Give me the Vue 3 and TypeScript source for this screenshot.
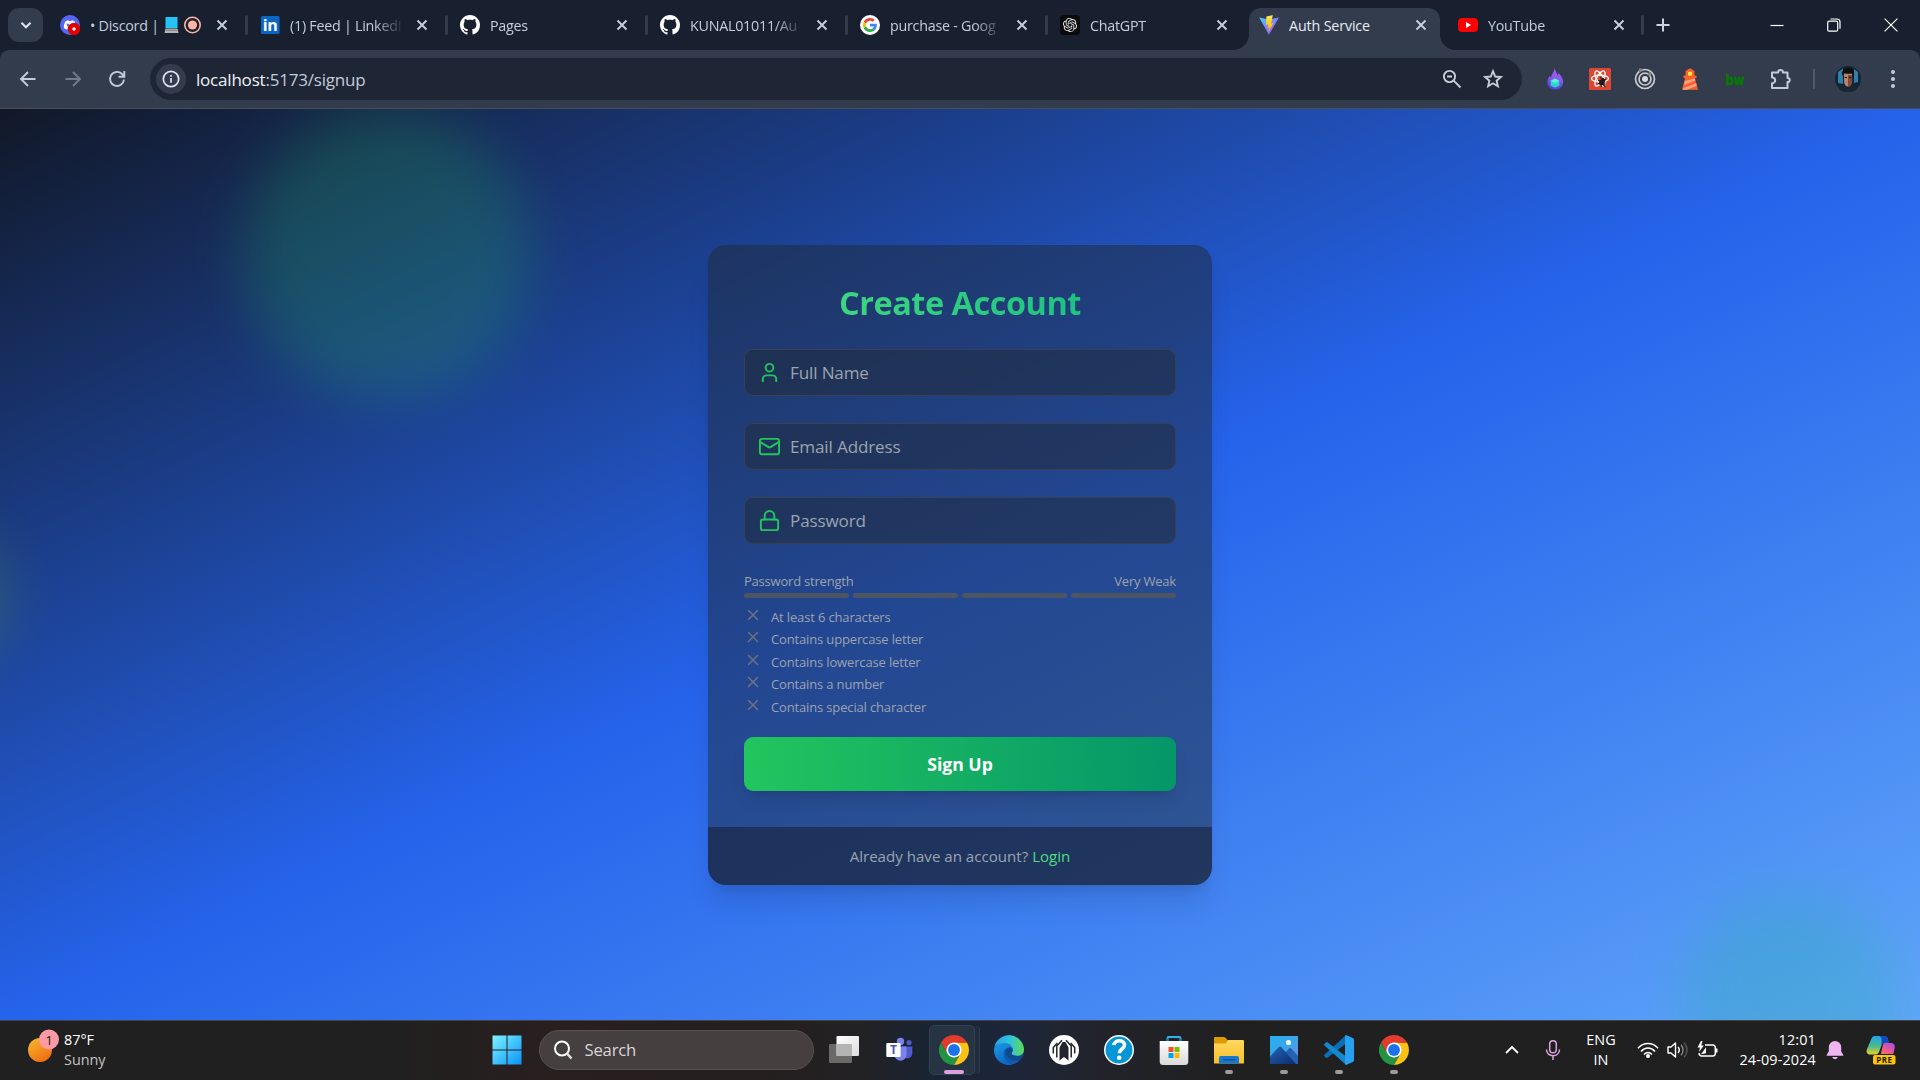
<script setup lang="ts">
interface Tab {
  icon: string
  title: string
  active?: boolean
  divider?: boolean
}

const tabs: Tab[] = [
  { icon: 'discord', title: '• Discord |', divider: true },
  { icon: 'linkedin', title: '(1) Feed | LinkedI', divider: true },
  { icon: 'github', title: 'Pages', divider: true },
  { icon: 'github', title: 'KUNAL01011/Au', divider: true },
  { icon: 'google', title: 'purchase - Goog', divider: true },
  { icon: 'chatgpt', title: 'ChatGPT' },
  { icon: 'vite', title: 'Auth Service', active: true },
  { icon: 'youtube', title: 'YouTube', divider: true },
]

const extensions: string[] = ['flame', 'react', 'rings', 'lighthouse', 'bw', 'puzzle']

const fields = [
  { icon: 'user', label: 'Full Name' },
  { icon: 'mail', label: 'Email Address' },
  { icon: 'lock', label: 'Password' },
]

const criteria: string[] = [
  'At least 6 characters',
  'Contains uppercase letter',
  'Contains lowercase letter',
  'Contains a number',
  'Contains special character',
]

const apps = [
  { icon: 'taskview', state: '' },
  { icon: 'teams', state: '' },
  { icon: 'chrome', state: 'focused' },
  { icon: 'edge', state: '' },
  { icon: 'arch', state: '' },
  { icon: 'help', state: '' },
  { icon: 'store', state: '' },
  { icon: 'explorer', state: 'running' },
  { icon: 'photos', state: 'running' },
  { icon: 'vscode', state: 'running' },
  { icon: 'chrome', state: 'running' },
]
</script>

<template>
  <div class="screen">
    <svg class="sprite" width="0" height="0" aria-hidden="true">
      <defs>
        <linearGradient id="g-vite" x1="0" y1="0" x2="1" y2="1"><stop offset="0" stop-color="#41d1ff" /><stop offset="1" stop-color="#bd34fe" /></linearGradient>
        <linearGradient id="g-bolt" x1="0" y1="0" x2="0" y2="1"><stop offset="0" stop-color="#ffea83" /><stop offset="0.2" stop-color="#ffdd35" /><stop offset="1" stop-color="#ffa800" /></linearGradient>
        <linearGradient id="g-flame" x1="0.6" y1="0" x2="0.4" y2="1"><stop offset="0" stop-color="#b45cf5" /><stop offset="0.5" stop-color="#8a55f2" /><stop offset="1" stop-color="#4b45dd" /></linearGradient>
        <linearGradient id="g-win" x1="0" y1="0" x2="1" y2="1"><stop offset="0" stop-color="#7df3ff" /><stop offset="1" stop-color="#0a93fb" /></linearGradient>
        <linearGradient id="g-sun" x1="0.2" y1="0" x2="0.8" y2="1"><stop offset="0" stop-color="#f5b52e" /><stop offset="1" stop-color="#f0680f" /></linearGradient>
        <linearGradient id="g-edge1" x1="0" y1="0.5" x2="1" y2="0.5"><stop offset="0" stop-color="#2b9fe4" /><stop offset="0.5" stop-color="#2fc2df" /><stop offset="1" stop-color="#61d94f" /></linearGradient>
        <linearGradient id="g-edge2" x1="0" y1="0" x2="0.6" y2="1"><stop offset="0" stop-color="#1b9de2" /><stop offset="1" stop-color="#0b65c6" /></linearGradient>
        <linearGradient id="g-folder" x1="0" y1="0" x2="0" y2="1"><stop offset="0" stop-color="#ffd95e" /><stop offset="1" stop-color="#f8bd2c" /></linearGradient>
        <linearGradient id="g-photo" x1="0" y1="0" x2="1" y2="1"><stop offset="0" stop-color="#26aef0" /><stop offset="0.55" stop-color="#3ba5e8" /><stop offset="1" stop-color="#8b7bdc" /></linearGradient>
        <linearGradient id="g-mount" x1="0" y1="0" x2="1" y2="1"><stop offset="0" stop-color="#2463b5" /><stop offset="1" stop-color="#0b2c6b" /></linearGradient>
        <linearGradient id="g-store" x1="0" y1="0" x2="0" y2="1"><stop offset="0" stop-color="#ffffff" /><stop offset="1" stop-color="#d9d9d9" /></linearGradient>
        <linearGradient id="g-tv1" x1="0" y1="0" x2="1" y2="1"><stop offset="0" stop-color="#ffffff" /><stop offset="1" stop-color="#dcdcdc" /></linearGradient>
        <linearGradient id="g-cop1" x1="0" y1="0" x2="0" y2="1"><stop offset="0" stop-color="#1fa3ee" /><stop offset="0.55" stop-color="#4cb98d" /><stop offset="1" stop-color="#e8d325" /></linearGradient>
        <linearGradient id="g-cop2" x1="0.8" y1="0" x2="0.2" y2="1"><stop offset="0" stop-color="#a84fe6" /><stop offset="0.5" stop-color="#e254a5" /><stop offset="1" stop-color="#fb6f5e" /></linearGradient>

        <symbol id="discord" viewBox="0 0 20 20">
          <circle cx="10" cy="10" r="10" fill="#5865f2" />
          <path d="M5.6 6.2C7 5.4 8 5.3 8.3 5.3l.4.7h2.6l.4-.7c.4 0 1.5.2 2.7.9 1.2 1.8 1.9 4.2 1.7 6.8-1 .9-2.3 1.3-3.2 1.4l-.7-1.2H7.8l-.7 1.2c-1-.1-2.2-.6-3.2-1.4-.2-2.8.5-5 1.7-6.8z" fill="#fff" />
          <ellipse cx="7.9" cy="10" rx="1.2" ry="1.4" fill="#5865f2" />
          <circle cx="14" cy="14" r="6.2" fill="#e00000" />
          <circle cx="14" cy="14" r="1.7" fill="#fff" />
        </symbol>
        <symbol id="linkedin" viewBox="0 0 20 20">
          <rect x="1" y="1" width="18.5" height="18" rx="1.5" fill="#0a66c2" />
          <text x="10.2" y="16" text-anchor="middle" font-family="Open Sans, sans-serif" font-weight="700" font-size="16" fill="#fff">in</text>
        </symbol>
        <symbol id="github" viewBox="0 0 16 16">
          <path fill="#fff" d="M8 0C3.58 0 0 3.58 0 8c0 3.54 2.29 6.53 5.47 7.59.4.07.55-.17.55-.38 0-.19-.01-.82-.01-1.49-2.01.37-2.53-.49-2.69-.94-.09-.23-.48-.94-.82-1.13-.28-.15-.68-.52-.01-.53.63-.01 1.08.58 1.23.82.72 1.21 1.87.87 2.33.66.07-.52.28-.87.51-1.07-1.78-.2-3.64-.89-3.64-3.95 0-.87.31-1.59.82-2.15-.08-.2-.36-1.02.08-2.12 0 0 .67-.21 2.2.82.64-.18 1.32-.27 2-.27s1.36.09 2 .27c1.53-1.04 2.2-.82 2.2-.82.44 1.1.16 1.92.08 2.12.51.56.82 1.27.82 2.15 0 3.07-1.87 3.75-3.65 3.95.29.25.54.73.54 1.48 0 1.07-.01 1.93-.01 2.2 0 .21.15.46.55.38A8.01 8.01 0 0 0 16 8c0-4.42-3.58-8-8-8z" />
        </symbol>
        <symbol id="google" viewBox="0 0 68 68">
          <circle cx="34" cy="34" r="34" fill="#fff" />
          <g transform="translate(10 10)">
            <path fill="#EA4335" d="M24 9.5c3.54 0 6.71 1.22 9.21 3.6l6.85-6.85C35.9 2.38 30.47 0 24 0 14.62 0 6.51 5.38 2.56 13.22l7.98 6.19C12.43 13.72 17.74 9.5 24 9.5z" />
            <path fill="#4285F4" d="M46.98 24.55c0-1.57-.15-3.09-.38-4.55H24v9.02h12.94c-.58 2.96-2.26 5.48-4.78 7.18l7.73 6c4.51-4.18 7.09-10.36 7.09-17.65z" />
            <path fill="#FBBC05" d="M10.53 28.59c-.48-1.45-.76-2.99-.76-4.59s.27-3.14.76-4.59l-7.98-6.19C.92 16.46 0 20.12 0 24c0 3.88.92 7.54 2.56 10.78l7.97-6.19z" />
            <path fill="#34A853" d="M24 48c6.48 0 11.93-2.13 15.89-5.81l-7.73-6c-2.15 1.45-4.92 2.3-8.16 2.3-6.26 0-11.57-4.22-13.47-9.91l-7.98 6.19C6.51 42.62 14.62 48 24 48z" />
          </g>
        </symbol>
        <symbol id="chatgpt" viewBox="0 0 34 34">
          <rect width="34" height="34" rx="7" fill="#0a0a0a" />
          <g transform="translate(5 5)">
            <path fill="#e8e8e8" d="M22.2819 9.8211a5.9847 5.9847 0 0 0-.5157-4.9108 6.0462 6.0462 0 0 0-6.5098-2.9A6.0651 6.0651 0 0 0 4.9807 4.1818a5.9847 5.9847 0 0 0-3.9977 2.9 6.0462 6.0462 0 0 0 .7427 7.0966 5.98 5.98 0 0 0 .511 4.9107 6.051 6.051 0 0 0 6.5146 2.9001A5.9847 5.9847 0 0 0 13.2599 24a6.0557 6.0557 0 0 0 5.7718-4.2058 5.9894 5.9894 0 0 0 3.9977-2.9001 6.0557 6.0557 0 0 0-.7475-7.0729zm-9.022 12.6081a4.4755 4.4755 0 0 1-2.8764-1.0408l.1419-.0804 4.7783-2.7582a.7948.7948 0 0 0 .3927-.6813v-6.7369l2.02 1.1686a.071.071 0 0 1 .038.052v5.5826a4.504 4.504 0 0 1-4.4945 4.4944zm-9.6607-4.1254a4.4708 4.4708 0 0 1-.5346-3.0137l.142.0852 4.783 2.7582a.7712.7712 0 0 0 .7806 0l5.8428-3.3685v2.3324a.0804.0804 0 0 1-.0332.0615L9.74 19.9502a4.4992 4.4992 0 0 1-6.1408-1.6464zM2.3408 7.8956a4.485 4.485 0 0 1 2.3655-1.9728V11.6a.7664.7664 0 0 0 .3879.6765l5.8144 3.3543-2.0201 1.1685a.0757.0757 0 0 1-.071 0l-4.8303-2.7865A4.504 4.504 0 0 1 2.3408 7.872zm16.5963 3.8558L13.1038 8.364 15.1192 7.2a.0757.0757 0 0 1 .071 0l4.8303 2.7913a4.4944 4.4944 0 0 1-.6765 8.1042v-5.6772a.79.79 0 0 0-.407-.667zm2.0107-3.0231l-.142-.0852-4.7735-2.7818a.7759.7759 0 0 0-.7854 0L9.409 9.2297V6.8974a.0662.0662 0 0 1 .0284-.0615l4.8303-2.7866a4.4992 4.4992 0 0 1 6.6802 4.66zM8.3065 12.863l-2.02-1.1638a.0804.0804 0 0 1-.038-.0567V6.0742a4.4992 4.4992 0 0 1 7.3757-3.4537l-.142.0805L8.704 5.459a.7948.7948 0 0 0-.3927.6813zm1.0976-2.3654l2.602-1.4998 2.6069 1.4998v2.9994l-2.5974 1.4997-2.6067-1.4997Z" />
          </g>
        </symbol>
        <symbol id="vite" viewBox="0 0 20 20">
          <path d="M.2 2.6 9.9 19.8 20 2.6 10 4.5z" fill="url(#g-vite)" />
          <path d="m13.8.2-6.4 1.3-.5 8.3 2.2-.4-.5 3.4 1.7-.5-1 5.2 5.2-9.6-2.4.5z" fill="url(#g-bolt)" />
        </symbol>
        <symbol id="youtube" viewBox="0 0 20 20">
          <rect y="3" width="20" height="14" rx="4" fill="#f00" />
          <path d="m8 7 5.2 3L8 13z" fill="#fff" />
        </symbol>

        <symbol id="flame" viewBox="0 0 20 22">
          <path d="M9.5 0c1 3.5 2.2 4 2.9 7.2.7-.7 1-1.200 1.200-2.200 2.200 2.500 5 6 4.600 9.600-.4 4.200-3.900 7-8 7-4.400 0-7.800-3.300-7.800-7.300 0-3 1.400-4.800 2.600-6.500.3 1 .7 1.700 1.300 2.200C5.500 6.500 9.700 4.500 9.500 0z" fill="url(#g-flame)" />
          <path d="m10 10.6 4.3 2.2v4.700L10 19.700l-4.300-2.200v-4.700z" fill="#31d5cf" />
          <path d="m10 10.600 4.300 2.200L10 15l-4.300-2.200z" fill="#5ff3d0" />
        </symbol>
        <symbol id="react" viewBox="0 0 22 22">
          <rect width="22" height="22" rx="1.5" fill="#dd4632" />
          <g fill="none" stroke="#fff" stroke-width="1.3">
            <ellipse cx="11" cy="10.5" rx="8.5" ry="3.3" />
            <ellipse cx="11" cy="10.5" rx="8.5" ry="3.3" transform="rotate(60 11 10.5)" />
            <ellipse cx="11" cy="10.5" rx="8.5" ry="3.3" transform="rotate(120 11 10.5)" />
          </g>
          <ellipse cx="13" cy="14" rx="2.6" ry="3.6" transform="rotate(35 13 14)" fill="#231a1a" />
          <path d="m9 12 7.500 4.500M11 9.500l6 2.500M9 15.500l3 .5.500 3M14.500 10l-1 6 3 3" stroke="#231a1a" stroke-width="1.1" fill="none" />
        </symbol>
        <symbol id="rings" viewBox="0 0 22 22">
          <g fill="none" stroke="#c9cbce" stroke-width="1.7"><circle cx="11" cy="11" r="9.5" /><circle cx="11" cy="11" r="6" /></g>
          <circle cx="11" cy="11" r="3" fill="#d8d9db" />
          <circle cx="6.5" cy="2.2" r="2" fill="#86847f" /><circle cx="15.5" cy="6" r="1.8" fill="#86847f" />
        </symbol>
        <symbol id="lighthouse" viewBox="0 0 22 22">
          <path d="M11 .3 15.5 3v4.500H17.500V10h-1.600L19 21.700H3L6.100 10H4.500V7.500h2V3z" fill="#f9622d" />
          <path d="m6 13 9.800-2.600.4 2L5.200 17zM4.300 20.300l12.800-5 .5 2.400-9.600 4H3.800z" fill="#ffa184" />
          <rect x="9" y="3.8" width="4" height="4" rx="1" fill="#ffe84a" />
        </symbol>
        <symbol id="bw" viewBox="0 0 22 22">
          <text x="11" y="16.5" text-anchor="middle" textLength="19" lengthAdjust="spacingAndGlyphs" font-family="DejaVu Sans, sans-serif" font-weight="700" font-size="14" fill="#047a04" stroke="#047a04" stroke-width=".5">bw</text>
        </symbol>
        <symbol id="puzzle" viewBox="0 0 22 22">
          <path d="M2 4.5h6.2C7.8 1 13.3 1 12.9 4.5H17.500V10c3-.4 3 4.400 0 4V20H2v-4.800c4.200.3 4.200-6.100 0-5.800z" fill="none" stroke="#c3cbdb" stroke-width="2" stroke-linejoin="round" />
        </symbol>

        <symbol id="user" viewBox="0 0 24 24"><path d="M19 21v-2a4 4 0 0 0-4-4H9a4 4 0 0 0-4 4v2" /><circle cx="12" cy="7" r="4" /></symbol>
        <symbol id="mail" viewBox="0 0 24 24"><rect width="20" height="16" x="2" y="4" rx="2" /><path d="m22 7-8.97 5.7a1.94 1.94 0 0 1-2.06 0L2 7" /></symbol>
        <symbol id="lock" viewBox="0 0 24 24"><rect width="18" height="11" x="3" y="11" rx="2" /><path d="M7 11V7a5 5 0 0 1 10 0v4" /></symbol>

        <symbol id="taskview" viewBox="0 0 30 30">
          <rect x="0" y="9" width="23" height="19" rx="1" fill="#6c6a69" />
          <rect x="7.5" y="1" width="22.5" height="20" rx="1" fill="url(#g-tv1)" />
          <path d="M7.5 9H23v12H7.500z" fill="#b4b4b4" />
        </symbol>
        <symbol id="teams" viewBox="0 0 30 30">
          <circle cx="16.5" cy="6.5" r="3.7" fill="#7b83eb" /><circle cx="25" cy="7.500" r="2.600" fill="#5059c9" />
          <path d="M18 11.500h10.300v7a5 5 0 0 1-7.500 4.200z" fill="#5059c9" />
          <path d="M10 11.500h12.500v8.300a6 6 0 0 1-12 0z" fill="#7b83eb" />
          <rect x="2.300" y="8" width="14.300" height="14" rx="1" fill="#fff" />
          <text x="9.500" y="19.300" text-anchor="middle" font-family="Open Sans, sans-serif" font-weight="700" font-size="12" fill="#4b53bc">T</text>
        </symbol>
        <symbol id="chrome" viewBox="0 0 48 48">
          <circle cx="24" cy="24" r="13" fill="#fff" />
          <path fill="#229342" d="M3.22 36A24 24 0 0 0 24 48l10.39-18a12 12 0 0 1-20.78 0L3.22 12a24 24 0 0 0 0 24z" />
          <path fill="#fbc116" d="M24 48a24 24 0 0 0 20.78-36H24a12 12 0 0 1 10.4 18z" />
          <path fill="#e33b2e" d="M24 12h20.78A24 24 0 0 0 3.21 12L13.6 30A12 12 0 0 1 24 12z" />
          <circle cx="24" cy="24" r="9.5" fill="#1a73e8" />
        </symbol>
        <symbol id="edge" viewBox="0 0 30 30">
          <circle cx="15" cy="15" r="15" fill="#0f5cae" />
          <path d="M.5 11.500A15 15 0 0 1 30 14.500c0 4-3 6.300-6.800 6.300-3.500 0-5.800-1.300-5.800-2.300 0-.8 1.400-1.200 1.400-3.500 0-3.300-3.500-6.200-8.300-6.200-4.500 0-8 1.200-10 2.700z" fill="url(#g-edge1)" />
          <path d="M0 15C.5 10 5.500 8 10.500 8c4.800 0 8 3 8 6-2.500-3-8.300-1.500-8.800 4-.5 6 4.300 10.500 8.300 11.700A15 15 0 0 1 0 15z" fill="url(#g-edge2)" />
          <path d="M17.400 18.500c.8 2.400 6.700 3.600 11.200 1.200l.8.800A15 15 0 0 1 26 25c-6 2-14.500-1.500-14.500-7.500 0-2.500 2.500-5.500 6-4.800 2 1.700.8 3.800-.1 5.800z" fill="#104a8e" />
          <path d="M29.300 20.500l3-2v5l-6.500 2.300a15 15 0 0 0 3.500-5.300z" fill="#1f2839" />
        </symbol>
        <symbol id="arch" viewBox="0 0 30 30">
          <circle cx="15" cy="15" r="15" fill="#fff" />
          <path d="M10.500 25.500V12.500L13.500 7h3l3 5.500v13L15 22z" fill="#23242c" />
          <path d="M7.800 22.500V11L13 5.200M22.200 22.500V11L17 5.200M4.300 18.500v-6l4-4.500M25.700 18.500v-6l-4-4.500" fill="none" stroke="#23242c" stroke-width="1.5" />
        </symbol>
        <symbol id="help" viewBox="0 0 30 30">
          <circle cx="15" cy="15" r="15" fill="#fff" /><circle cx="15" cy="15" r="13.5" fill="#0596d8" />
          <path d="M10 10.200c.3-6 10.500-5.800 10.500-.2 0 4-5.300 4-5.300 8.300" fill="none" stroke="#fff" stroke-width="3.6" />
          <circle cx="15.200" cy="22.800" r="2.300" fill="#fff" />
        </symbol>
        <symbol id="store" viewBox="0 0 30 30">
          <path d="M8.500 7.500V3a1 1 0 0 1 1-1h11a1 1 0 0 1 1 1v4.500" fill="none" stroke="#2cb5ea" stroke-width="1.9" />
          <path d="M.7 6h28.600v20.500a3.500 3.500 0 0 1-3.500 3.500H4.200a3.500 3.500 0 0 1-3.500-3.500z" fill="url(#g-store)" />
          <path d="M8.500 6V3.500M21.500 6V3.500" stroke="#1479b8" stroke-width="1.9" />
          <path d="M9.500 12h5v5h-5z" fill="#f25022" /><path d="M15.500 12h5v5h-5z" fill="#7fba00" />
          <path d="M9.500 18h5v5h-5z" fill="#00a4ef" /><path d="M15.500 18h5v5h-5z" fill="#ffb900" />
        </symbol>
        <symbol id="explorer" viewBox="0 0 30 30">
          <path d="M0 8V3.200C0 2.500.5 2 1.200 2h8.600c.6 0 1 .2 1.400.6L14 5.500V9H0z" fill="#dc9a06" />
          <path d="M0 8.500h11.500L14 5h14.800c.7 0 1.200.5 1.200 1.200v22.300H0z" fill="url(#g-folder)" />
          <path d="M5 28.500V23a2 2 0 0 1 2-2h16a2 2 0 0 1 2 2v5.500z" fill="#1479cf" />
          <path d="M9 24.700h12" stroke="#0c4f94" stroke-width="1.3" />
        </symbol>
        <symbol id="photos" viewBox="0 0 30 30">
          <rect x="1" y="1" width="28" height="28" fill="url(#g-photo)" />
          <circle cx="19.500" cy="7.500" r="2.600" fill="#f2f6fb" />
          <path d="m13 21 7-7.500c.7-.7 1.500-.7 2.200 0L29 21v8H13z" fill="#2262b0" />
          <path d="M1 21.500 9.800 12c.8-.8 1.600-.8 2.400 0L27 29H1z" fill="url(#g-mount)" />
        </symbol>
        <symbol id="vscode" viewBox="0 0 30 30">
          <path d="M22.200 0 22 8.500 3.500 22.800a1 1 0 0 1-1.300 0L.4 21.200a1 1 0 0 1 0-1.500z" fill="#0b6fb5" />
          <path d="M22.200 30 22 21.500 3.500 7.300a1 1 0 0 0-1.300 0L.4 8.900a1 1 0 0 0 0 1.500z" fill="#1487cf" />
          <path d="M22 0l6.800 2.900c.7.4 1.200 1 1.200 1.900v20.400c0 .8-.5 1.500-1.200 1.900L22 30c-.8-.5-1-.8-1-1.800V1.800C21 .8 21.200.5 22 0z" fill="#26a1f1" />
        </symbol>
      </defs>
    </svg>

    <header class="tabstrip">
      <button class="tab-search">
        <svg width="14" height="14" viewBox="0 0 14 14"><path d="m2.500 4.800 4.500 4.500 4.500-4.500" fill="none" stroke="#dfe5f0" stroke-width="2" /></svg>
      </button>
      <div class="tabs">
        <div v-for="(tab, i) in tabs" :key="i" class="tab" :class="{ active: tab.active }">
          <svg class="favicon"><use :href="'#' + tab.icon" /></svg>
          <span class="tab-title">{{ tab.title }}<svg v-if="tab.icon === 'discord'" class="title-emoji" width="38" height="20" viewBox="0 0 38 20">
            <rect x="1.5" y="2" width="12" height="11" fill="#24c3f5" /><path d="M1.500 13.500h12l1 4.500H.5z" fill="#b5b5b5" /><path d="M2 15.200h11" stroke="#777" />
            <circle cx="28.500" cy="10" r="7.700" fill="none" stroke="#ffb3a5" stroke-width="1.600" /><circle cx="28.500" cy="10" r="4.600" fill="#ffb3a5" />
          </svg></span>
          <svg class="tab-close" width="20" height="20" viewBox="0 0 20 20"><path d="m5.500 5.500 9 9m0-9-9 9" /></svg>
          <i v-if="tab.divider" class="divider"></i>
        </div>
        <svg class="new-tab" width="20" height="20" viewBox="0 0 20 20"><path d="M10 3.500v13M3.500 10h13" stroke="#c9d2e3" stroke-width="2" /></svg>
      </div>
      <div class="window-controls">
        <svg width="14" height="14" viewBox="0 0 14 14"><path d="M.5 7.500h13" /></svg>
        <svg width="14" height="14" viewBox="0 0 14 14"><rect x=".7" y="3.200" width="10" height="10" rx="1.500" /><path d="M3.500 1h6.500a3 3 0 0 1 3 3v6.800" /></svg>
        <svg width="14" height="14" viewBox="0 0 14 14"><path d="m.6.6 12.800 12.800m0-12.800L.6 13.400" /></svg>
      </div>
    </header>

    <nav class="toolbar">
      <div class="nav-buttons">
        <svg width="20" height="20" viewBox="0 0 20 20"><path d="M17.500 10H3m7-7-7 7 7 7" /></svg>
        <svg class="disabled" width="20" height="20" viewBox="0 0 20 20"><path d="M2.500 10H17m-7-7 7 7-7 7" /></svg>
        <svg width="20" height="20" viewBox="0 0 20 20"><path d="M17 10.500a7 7 0 1 1-2-5.500l2 2.200M17.300 2v5.700h-5.700" /></svg>
      </div>
      <div class="omnibox">
        <span class="site-info"><svg width="18" height="18" viewBox="0 0 18 18"><circle cx="9" cy="9" r="7.700" /><path d="M9 8v4.800M9 5v1.700" /></svg></span>
        <span class="url">localhost<span class="url-path">:5173/signup</span></span>
        <svg class="box-icon" width="22" height="22" viewBox="0 0 22 22"><circle cx="8.500" cy="8.500" r="5.600" /><path d="m12.700 12.700 6.800 6.800M6 8.500h5" /></svg>
        <svg class="box-icon" width="22" height="22" viewBox="0 0 22 22"><path d="m11 3.200 2.200 5.300 5.700.5-4.300 3.700 1.300 5.600L11 15.300l-4.900 3 1.300-5.600L3.100 9l5.700-.5z" /></svg>
      </div>
      <div class="extensions">
        <span v-for="e in extensions" :key="e" class="ext"><svg width="22" height="22"><use :href="'#' + e" /></svg></span>
      </div>
      <i class="toolbar-sep"></i>
      <svg class="avatar" width="26" height="26" viewBox="0 0 26 26">
        <circle cx="13" cy="13" r="13" fill="#122634" />
        <path d="M3 6 8 2.500V18l-5-1zM23 6l-4-3v14l4-1z" fill="#2f7fa8" />
        <path d="M4 23c1-4 5-5 9-5s8 1 9 5a13 13 0 0 1-18 0z" fill="#1a2632" />
        <path d="M9 7h8v8c0 3-1.500 5.500-4 5.500S9 18 9 15z" fill="#b8826b" />
        <path d="M13 9h4v6c0 3-1.500 5.500-4 5.500z" fill="#7c4c3f" />
        <path d="M7.300 10C6 4 10 1.500 14 1.800c4 0 6 3.500 4.700 8.200l-1.500-2.500c-3 .5-6 .5-8.200-.3z" fill="#11100f" />
        <path d="M9.500 11.500h2.500m2 0h2.500" stroke="#1b1614" stroke-width="1.2" />
      </svg>
      <svg class="kebab" width="8" height="22" viewBox="0 0 8 22"><circle cx="4" cy="4" r="2" /><circle cx="4" cy="11" r="2" /><circle cx="4" cy="18" r="2" /></svg>
    </nav>

    <main class="page">
      <div class="blob blob-green"></div>
      <div class="blob blob-emerald"></div>
      <div class="blob blob-lime"></div>

      <section class="card">
        <form class="card-body" @submit.prevent>
          <h2 class="heading">Create Account</h2>
          <label v-for="f in fields" :key="f.label" class="field">
            <svg class="field-icon"><use :href="'#' + f.icon" /></svg>
            <span>{{ f.label }}</span>
          </label>
          <div class="strength-row"><span>Password strength</span><span>Very Weak</span></div>
          <div class="bars"><i v-for="n in 4" :key="n"></i></div>
          <ul class="criteria">
            <li v-for="c in criteria" :key="c">
              <svg width="18" height="18" viewBox="0 0 24 24"><path d="M18 6 6 18M6 6l12 12" /></svg>
              <span>{{ c }}</span>
            </li>
          </ul>
          <button class="submit" type="submit">Sign Up</button>
        </form>
        <footer class="card-footer">Already have an account? <a>Login</a></footer>
      </section>
    </main>

    <div class="taskbar">
      <div class="weather">
        <svg width="32" height="40" viewBox="0 0 32 40">
          <circle cx="12" cy="23" r="12" fill="url(#g-sun)" />
          <circle cx="21" cy="12.500" r="10" fill="#ff99a4" />
          <text x="21" y="17.500" text-anchor="middle" font-family="Open Sans, sans-serif" font-size="13.500" fill="#1c1c1c">1</text>
        </svg>
        <div class="weather-text"><span>87°F</span><span class="dim">Sunny</span></div>
      </div>

      <div class="apps">
        <span class="app">
          <svg width="30" height="30" viewBox="0 0 30 30"><path d="M.5.5h14v14H.5zM15.500.5h14v14h-14zM.5 15.500h14v14H.5zM15.500 15.500h14v14h-14z" fill="url(#g-win)" /></svg>
        </span>
        <div class="search">
          <svg width="20" height="20" viewBox="0 0 20 20"><circle cx="9" cy="8.500" r="7" fill="none" stroke="#fff" stroke-width="2" /><path d="m14 13.500 4.500 5" stroke="#dfe3e8" stroke-width="2.500" /></svg>
          <span>Search</span>
        </div>
        <span v-for="(a, i) in apps" :key="i" class="app" :class="a.state">
          <svg width="30" height="30"><use :href="'#' + a.icon" /></svg>
        </span>
      </div>

      <div class="tray">
        <svg class="chev" width="16" height="16" viewBox="0 0 16 16"><path d="m2 11 6-6 6 6" fill="none" stroke="#fff" stroke-width="1.800" /></svg>
        <svg class="mic" width="16" height="20" viewBox="0 0 16 20"><g fill="none" stroke="#d9a5d9" stroke-width="1.500"><rect x="4.700" y=".8" width="6.600" height="12" rx="3.300" /><path d="M1.500 9.500c0 8.300 13 8.300 13 0M8 16v4" /></g></svg>
        <div class="lang"><span>ENG</span><span>IN</span></div>
        <svg class="wifi" width="22" height="18" viewBox="0 0 22 18"><g fill="none" stroke="#fff" stroke-width="1.500"><path d="M1 7.200c5.500-6.300 14.500-6.300 20 0M4 10.400c4-4.600 10-4.600 14 0M7 13.500c2.500-2.800 5.500-2.800 8 0" /></g><circle cx="11" cy="15" r="2" fill="#fff" /></svg>
        <svg class="sound" width="22" height="18" viewBox="0 0 22 18"><g fill="none" stroke="#fff" stroke-width="1.400"><path d="M1 6v6h3l4.500 4V2L4 6z" stroke-linejoin="round" /><path d="M11 6c1.500 1.700 1.500 4.300 0 6" /><path d="M14 3.800c2.800 3 2.800 7.400 0 10.400" stroke="#888" /><path d="M17 1.800c4 4 4 10.400 0 14.400" stroke="#555" /></g></svg>
        <svg class="battery" width="22" height="18" viewBox="0 0 22 18"><path d="M8 4h8a2.300 2.300 0 0 1 2.300 2.300v6.400A2.300 2.300 0 0 1 16 15H4.500a2.300 2.300 0 0 1-2.300-2.300V12" fill="none" stroke="#fff" stroke-width="1.500" /><path d="M19 7.500h1.500v4H19M4 13.200l5-1v-6l-3.500 5z" fill="#fff" /><path d="M4 0 .5 6.500H3L2 11l4.800-6.500H4.300L5.500 0z" fill="#fff" /></svg>
        <div class="clock"><span>12:01</span><span>24-09-2024</span></div>
        <svg class="bell" width="18" height="20" viewBox="0 0 18 20"><path d="M9 1a6.200 6.200 0 0 1 6.200 6.200v4L17.300 15v.8H.7V15l2.100-3.800v-4A6.200 6.200 0 0 1 9 1z" fill="#efb5ef" /><path d="M6.200 17h5.600a2.900 2.900 0 0 1-5.600 0z" fill="#efb5ef" /></svg>
        <svg class="copilot" width="30" height="30" viewBox="0 0 30 30">
          <path d="M5.500 3.500C6.300 1.200 7.700 1 9.500 1h8.700c2 0 2.900 1 3.500 2.700l1 3.800h-2.500c-2.700 0-4 1-4.900 3.500l-2.300 6c-.6 1.600-1.600 2.500-3.500 2.500H4.500C1.500 19.500 0 17.500.8 14.500z" fill="url(#g-cop1)" />
          <path d="M13.500 1h4.700c2 0 2.900 1 3.500 2.700l1 3.800h-2.500c-2.700 0-4 1-4.900 3.500C15.500 7 16.500 2.500 13.500 1z" fill="#1148c4" />
          <path d="M19 8h6c3 0 4.300 2.300 3.600 5.500l-1.300 5.500H14.800l2-8.500C17.200 8.800 17.700 8 19 8z" fill="url(#g-cop2)" />
          <rect x="7" y="20" width="22.500" height="9.500" rx="2" fill="#fbc40d" />
          <text x="18.300" y="27.700" text-anchor="middle" font-family="Open Sans, sans-serif" font-weight="700" font-size="8" letter-spacing=".5" fill="#241c00">PRE</text>
        </svg>
      </div>
    </div>
  </div>
</template>

<style>
body {
  background: #202020;
  overflow: hidden;
}
</style>

<style scoped>
.screen {
  width: 1920px;
  height: 1080px;
  display: flex;
  flex-direction: column;
  overflow: hidden;
  font-family: 'Open Sans', 'Noto Sans', sans-serif;
  background: #182030;
}
.sprite {
  position: absolute;
}
svg {
  display: block;
  flex: none;
}

/* Tab strip */
.tabstrip {
  height: 50px;
  display: flex;
  align-items: flex-end;
  flex: none;
}
.tab-search {
  width: 35px;
  height: 34px;
  margin: 0 7px 8px 8px;
  padding: 0;
  border: 0;
  border-radius: 11px;
  background: #333c4d;
  display: flex;
  align-items: center;
  justify-content: center;
}
.tabs {
  display: flex;
  align-items: flex-end;
}
.tab {
  box-sizing: border-box;
  position: relative;
  width: 200px;
  height: 42px;
  padding: 0 2px 8px 10px;
  display: flex;
  align-items: center;
  color: #c3cddd;
  font-size: 14.3px;
  letter-spacing: -0.25px;
}
.tab.active {
  width: 191px;
  margin: 0 8px 0 -1px;
  padding: 0 0 8px 10px;
  border-radius: 12px 12px 0 0;
  background: #333c4d;
  color: #e6ebf4;
  letter-spacing: -0.15px;
}
.tab.active::before,
.tab.active::after {
  content: '';
  position: absolute;
  bottom: 0;
  width: 15px;
  height: 15px;
}
.tab.active::before {
  left: -15px;
  background: radial-gradient(circle at 0 0, transparent 14.5px, #333c4d 15px);
}
.tab.active::after {
  right: -15px;
  background: radial-gradient(circle at 100% 0, transparent 14.5px, #333c4d 15px);
}
.favicon {
  width: 20px;
  height: 20px;
  margin-right: 10px;
}
.tab-title {
  width: 114px;
  margin-right: 8px;
  padding-top: 2px;
  display: flex;
  align-items: center;
  white-space: nowrap;
  line-height: 22px;
  mask-image: linear-gradient(90deg, #000 84px, transparent 114px);
}
.tab:first-child .tab-title,
.tab.active .tab-title {
  mask-image: none;
}
.title-emoji {
  margin: -2px 0 0 5px;
}
.tab-close path {
  fill: none;
  stroke: #c9d2e3;
  stroke-width: 1.8;
}
.divider {
  width: 3px;
  height: 20px;
  margin-left: 13px;
  border-radius: 2px;
  background: #333c4d;
}
.tab:nth-last-child(2) {
  width: 198px;
}
.tab:nth-last-child(2) .tab-title {
  margin-right: 7px;
}
.tab:nth-last-child(2) .divider {
  margin-left: 12px;
}
.new-tab {
  margin: 0 0 15px 7px;
}
.window-controls {
  margin: 0 22px 18px auto;
  display: flex;
  gap: 43px;
}
.window-controls svg {
  fill: none;
  stroke: #fff;
  stroke-width: 1.2;
}

/* Toolbar */
.toolbar {
  box-sizing: border-box;
  height: 59px;
  flex: none;
  display: flex;
  align-items: center;
  border-bottom: 1px solid #4a4d55;
  border-radius: 9px 9px 0 0;
  background: #333c4d;
}
.nav-buttons {
  width: 132px;
  padding-left: 18px;
  display: flex;
  gap: 24.5px;
}
.nav-buttons svg {
  fill: none;
  stroke: #c3cbdb;
  stroke-width: 1.9;
}
.nav-buttons .disabled {
  stroke: #737b8b;
}
.omnibox {
  width: 1372px;
  height: 42px;
  border-radius: 21px;
  background: #1e2636;
  display: flex;
  align-items: center;
}
.site-info {
  width: 30px;
  height: 30px;
  margin: 0 10px 0 6px;
  border-radius: 50%;
  background: #333c4d;
  display: flex;
  align-items: center;
  justify-content: center;
}
.site-info svg {
  fill: none;
  stroke: #dfe5f0;
  stroke-width: 1.7;
}
.url {
  flex: 1;
  color: #eef1f7;
  font-size: 17px;
  letter-spacing: -0.2px;
}
.url-path {
  color: #c3cbd9;
}
.box-icon {
  margin-right: 18.5px;
  fill: none;
  stroke: #c8cdd6;
  stroke-width: 1.9;
}
.extensions {
  margin-left: 10px;
  display: flex;
}
.ext {
  width: 45.2px;
  display: flex;
  justify-content: center;
}
.toolbar-sep {
  width: 2px;
  height: 20px;
  margin: 0 20px 0 10px;
  background: #4e586a;
}
.kebab {
  margin-left: 28px;
  fill: #c3cbdb;
}

/* Page */
.page {
  box-sizing: border-box;
  position: relative;
  height: 911px;
  padding-top: 1px;
  flex: none;
  display: flex;
  align-items: center;
  justify-content: center;
  overflow: hidden;
  background: linear-gradient(to bottom right, #111827, #2563eb, #60a5fa);
}
.blob {
  position: absolute;
  border-radius: 50%;
  opacity: 0.2;
  filter: blur(27px);
}
.blob-green {
  width: 288px;
  height: 288px;
  left: 243px;
  top: 2px;
  background: #22c55e;
}
.blob-emerald {
  width: 216px;
  height: 216px;
  left: 1682px;
  top: 784px;
  background: #10b981;
}
.blob-lime {
  width: 144px;
  height: 144px;
  left: -138px;
  top: 416px;
  background: #84cc16;
}
.card {
  position: relative;
  width: 504px;
  border-radius: 18px;
  overflow: hidden;
  background: rgba(31, 41, 55, 0.5);
  box-shadow: 0 22.5px 28px -5.6px rgba(0, 0, 0, 0.1), 0 9px 11px -6.7px rgba(0, 0, 0, 0.1);
}
.card-body {
  padding: 36px;
}
.heading {
  margin: 0 0 26px;
  padding-top: 1px;
  font-size: 32.5px;
  line-height: 41px;
  font-weight: 700;
  letter-spacing: -0.5px;
  text-align: center;
  color: transparent;
  background: linear-gradient(to right, #4ade80, #10b981);
  background-clip: text;
}
.field {
  box-sizing: border-box;
  height: 47px;
  margin-bottom: 27px;
  padding-left: 13px;
  display: flex;
  align-items: center;
  border: 1px solid #374151;
  border-radius: 9px;
  background: rgba(31, 41, 55, 0.5);
  color: #9ca3af;
  font-size: 17.1px;
  letter-spacing: -0.15px;
}
.field-icon {
  width: 23px;
  height: 23px;
  margin-right: 9px;
  fill: none;
  stroke: #22c55e;
  stroke-width: 2;
  stroke-linecap: round;
  stroke-linejoin: round;
}
.strength-row {
  display: flex;
  justify-content: space-between;
  padding-top: 1px;
  line-height: 18px;
  font-size: 13px;
  letter-spacing: -0.21px;
  color: #9ca3af;
}
.bars {
  display: flex;
  gap: 4px;
  margin-top: 3px;
}
.bars i {
  flex: 1;
  height: 5px;
  border-radius: 3px;
  background: #4b5563;
}
.criteria {
  margin: 9.8px 0 21.2px;
  padding: 0;
  list-style: none;
  display: flex;
  flex-direction: column;
  gap: 4.5px;
}
.criteria li {
  display: flex;
  line-height: 18px;
  font-size: 13px;
  letter-spacing: -0.15px;
  color: #9ca3af;
}
.criteria svg {
  margin: -2px 9px 2px 0;
  fill: none;
  stroke: #6b7280;
  stroke-width: 2;
  stroke-linecap: round;
}
.submit {
  display: block;
  width: 100%;
  height: 54px;
  border: 0;
  border-radius: 9px;
  background: linear-gradient(to right, #22c55e, #059669);
  box-shadow: 0 11px 17px -3.4px rgba(0, 0, 0, 0.1), 0 4.5px 7px -4.5px rgba(0, 0, 0, 0.1);
  color: #fff;
  font: 700 17.6px 'Open Sans', 'Noto Sans', sans-serif;
  letter-spacing: 0;
}
.card-footer {
  height: 58px;
  line-height: 59px;
  text-align: center;
  background: rgba(17, 24, 39, 0.5);
  color: #9ca3af;
  font-size: 15.1px;
  letter-spacing: 0;
}
.card-footer a {
  color: #4ade80;
}

/* Taskbar */
.taskbar {
  box-sizing: border-box;
  height: 60px;
  padding-bottom: 1px;
  flex: none;
  display: flex;
  align-items: center;
  border-top: 1px solid #454545;
  background: linear-gradient(90deg, #202020 380px, #281f1f 540px, #251f1f 760px, #222123 860px, #182436 940px, #1d2638 1020px, #22232a 1100px, #202020 1240px);
  color: #fff;
  font-size: 14.4px;
  letter-spacing: 0;
  line-height: 20px;
}
.weather {
  width: 451.5px;
  padding-left: 28px;
  display: flex;
  align-items: center;
}
.weather svg {
  margin: -6px 4px 0 0;
}
.weather-text,
.lang,
.clock {
  display: flex;
  flex-direction: column;
  margin-top: -1px;
}
.dim {
  color: #c4c4c4;
}
.apps {
  display: flex;
  align-items: center;
}
.app {
  position: relative;
  width: 55px;
  height: 50px;
  display: flex;
  align-items: center;
  justify-content: center;
}
.app svg {
  position: relative;
}
.search {
  box-sizing: border-box;
  width: 275px;
  height: 40px;
  margin: 0 2.5px 0 4px;
  padding-left: 13px;
  display: flex;
  align-items: center;
  gap: 12px;
  border: 1px solid #575151;
  border-radius: 20px;
  background: #453f3f;
  color: #d8d6d6;
  font-size: 16.7px;
  letter-spacing: -0.2px;
}
.focused::before {
  content: '';
  position: absolute;
  inset: 0 6px 0 3px;
  border: 1px solid #33404f;
  border-radius: 5px;
  background: #263342;
  box-shadow: 5px 0 0 -1px #202b3b, 6px 0 0 -1px #303b4a;
}
.focused::after,
.running::after {
  content: '';
  position: absolute;
  bottom: 1px;
  left: 23.5px;
  width: 8px;
  height: 4px;
  border-radius: 2px;
  background: #9b9b9b;
}
.focused::after {
  left: 17.5px;
  width: 20px;
  background: #dd9fe0;
}
.tray {
  margin-left: auto;
  display: flex;
  align-items: center;
}
.chev {
  margin-right: 25px;
}
.mic {
  margin-right: 15px;
}
.lang {
  width: 50px;
  margin-right: 11px;
  align-items: center;
}
.wifi,
.sound {
  margin-right: 8px;
}
.clock {
  width: 97px;
  align-items: flex-end;
  letter-spacing: 0.15px;
}
.bell {
  margin: 0 22px 0 10px;
}
.copilot {
  margin-right: 24px;
}
</style>
